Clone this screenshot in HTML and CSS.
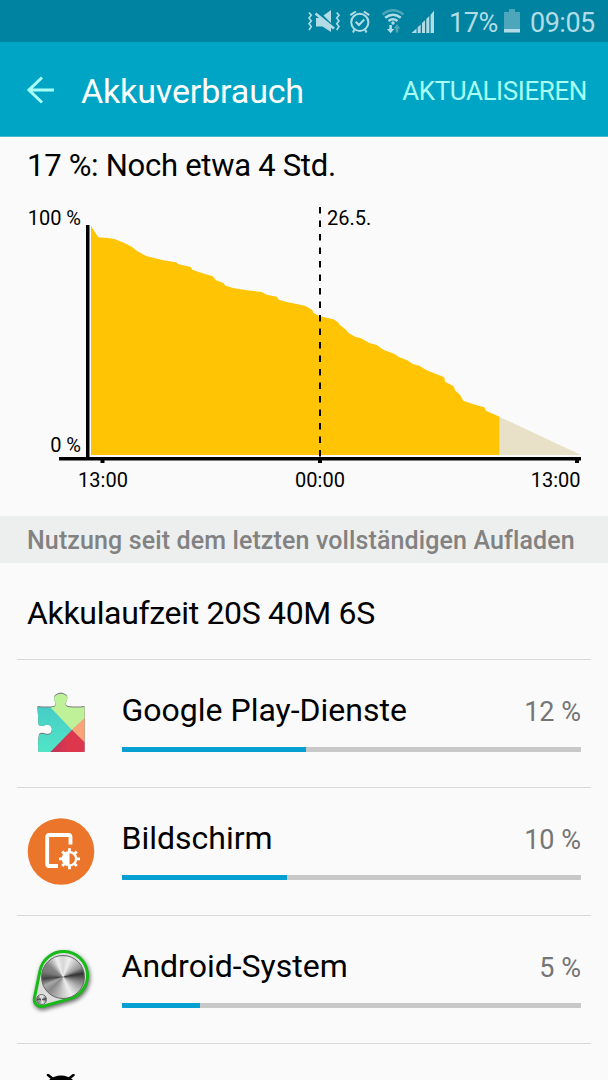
FILE: index.html
```
<!DOCTYPE html>
<html lang="de">
<head>
<meta charset="UTF-8">
<meta name="viewport" content="width=device-width, initial-scale=1.0">
<title>Akkuverbrauch</title>
<link rel="stylesheet" href="styles.css">
</head>
<body>

<div class="status-bar">
    <svg class="status-icons" width="132" height="42" viewBox="304 0 132 42">
        <!-- Ton aus -->
        <g fill="none" stroke="#b2dce5" stroke-width="1.6">
            <path d="M309 12.500l2.300 2.800-2.300 2.800 2.300 2.800-2.300 2.800 2.300 2.800-2.300 3.500"/>
            <path d="M336.700 12.500l2.300 2.800-2.300 2.800 2.300 2.800-2.300 2.800 2.300 2.800-2.300 3.500"/>
        </g>
        <path fill="#b2dce5" d="M323.500 15.500l7.500-5.500v13zM316 18h4.500l10.500 8.500v5.500l-8.500-5.500H316z"/>
        <path stroke="#b2dce5" stroke-width="2.600" d="M315.500 13.500L334 28.500"/>
        <!-- Wecker -->
        <g fill="none" stroke="#b2dce5" stroke-width="2">
            <circle cx="359.800" cy="22.300" r="8.600"/>
            <path d="M355.700 21.800l3.200 3.200 5.400-5.500M350.300 15.200l5.500-3.700M369.300 15.200l-5.500-3.700M354.500 29.500l-1.500 3M365 29.500l1.500 3"/>
        </g>
        <!-- WLAN -->
        <g fill="none" stroke-width="2.500">
            <path stroke="#4da6ba" d="M382.500 14.500q10.500-8.400 21 0"/>
            <path stroke="#b2dce5" d="M385.200 17.800q7.800-6 15.600 0M388.500 21q4.500-3.600 9 0"/>
        </g>
        <circle cx="393" cy="23" r="1.700" fill="#b2dce5"/>
        <path fill="#b2dce5" d="M389.300 25h2.600v4h2.400l-3.700 4.300-3.700-4.300h2.400z"/>
        <path fill="#4da6ba" d="M395.700 32.500h2.600v-4h2l-3.300-4.300-3.300 4.300h2z"/>
        <!-- Empfang -->
        <path fill="#b2dce5" d="M411.500 33l5-4.600V33zM417.700 27.300l3-2.900V33h-3zM422 23.100l3-2.900V33h-3zM426.300 19l3-2.900V33h-3zM430.600 14.700l3.400-4V33h-3.400z"/>
    </svg>
    <span class="percent">17%</span>
    <svg class="battery" width="16" height="24" viewBox="0 0 16 24">
        <path fill="#4da6ba" d="M5 0h6v3h5v17H0V3h5z"/>
        <path fill="#b2dce5" d="M0 20h16v3.500H0z"/>
    </svg>
    <span class="clock">09:05</span>
</div>

<div class="header">
    <svg class="back" width="28" height="28" viewBox="0 0 28 28">
        <path d="M27 14H2M15 1.500L2 14l13 12.500" fill="none" stroke="#a7fff6" stroke-width="3"/>
    </svg>
    <div class="title">Akkuverbrauch</div>
    <div class="refresh">AKTUALISIEREN</div>
</div>

<div class="remaining">17 %: Noch etwa 4 Std.</div>

<svg class="chart" width="608" height="316" viewBox="0 200 608 316">
    <path fill="#e9e1c7" d="M499.500 416.700L580 454.500V455h-80.500z"/>
    <path fill="#ffc403" d="M91 455V226L98.300 237.300 108 238 115 239.300 125 243.300 131.700 246.700 136.700 250.700 146 256 163.300 260.300 176 262.300 178.700 264.300 190.700 267 192.300 269.700 201.700 273 212.700 276.300 216 280.300 223.300 283 225.300 285.700 233.300 288 246.700 290.300 261.700 292 266.700 294.700 277 296.700 278.700 299.700 286.700 302 305 305.700 312.300 310 313.300 312.700 319 316 333.300 319.300 337.700 322 340 325 346 329.700 348.300 332.700 355 336.700 361 338.300 369.300 343 376.700 345 383.300 349.700 395 354.300 398.700 357 407.300 360.300 412.700 364 419.300 365.700 426.700 370.300 444.300 377.300 445 381.700 453.700 386.300 455.300 390.700 460 394.700 463.300 400.700 473.300 404.300 484.300 407.300 486 410.700 499.500 416.700V455z"/>
    <path class="day-line" d="M320 207V458"/>
    <path class="axis" d="M86 225h3.500v232H581v3.500h-2V463h-4v-2.500H322V463h-4v-2.500H104.500V463h-4v-2.500H59V457h27z"/>
    <text x="81" y="225" text-anchor="end">100 %</text>
    <text x="81" y="452" text-anchor="end">0 %</text>
    <text x="327" y="225">26.5.</text>
    <text x="103" y="487" text-anchor="middle">13:00</text>
    <text x="320" y="487" text-anchor="middle">00:00</text>
    <text x="580.500" y="487" text-anchor="end">13:00</text>
</svg>

<div class="section-title">Nutzung seit dem letzten vollständigen Aufladen</div>
<div class="runtime">Akkulaufzeit 20S 40M 6S</div>

<div class="app-list">
    <div class="item">
        <svg class="icon" width="68" height="68" viewBox="0 1.500 68 68">
            <defs>
                <clipPath id="puzzle">
                    <path d="M10.500 18.500Q20 19.500 27 18.500Q29.500 17.500 28.500 14Q26 10.500 28 7.500Q34 2.500 39.500 7.500Q41.500 10.500 38.500 14.500Q38 18 41 18.500Q49 19.500 57.500 18.500V63.500H11.500Q10.500 56 12 46.500Q13.500 44.500 17 45.500Q24.500 48.500 25 41Q24 34.500 17 37Q13 38.500 11.500 36Z"/>
                </clipPath>
                <linearGradient id="teal" x1="0" y1="0" x2="0" y2="1">
                    <stop offset="0" stop-color="#42c2c6"/>
                    <stop offset="1" stop-color="#52e8c7"/>
                </linearGradient>
                <linearGradient id="red">
                    <stop offset="0" stop-color="#b5325e"/>
                    <stop offset=".5" stop-color="#dd374e"/>
                </linearGradient>
            </defs>
            <path class="puzzle-edge" d="M10.500 18.500Q20 19.500 27 18.500Q29.500 17.500 28.500 14Q26 10.500 28 7.500Q34 2.500 39.500 7.500Q41.500 10.500 38.500 14.500Q38 18 41 18.500Q49 19.500 57.500 18.500V63.500H11.500Q10.500 56 12 46.500Q13.500 44.500 17 45.500Q24.500 48.500 25 41Q24 34.500 17 37Q13 38.500 11.500 36Z"/>
            <g clip-path="url(#puzzle)">
                <path fill="url(#teal)" d="M5 0h20l20 41.500L20 68H5z"/>
                <path fill="#bff199" d="M24 19.500V0h40v24L45 41.500z"/>
                <path fill="#faa477" d="M45 41.500L62 25v34z"/>
                <path fill="url(#red)" d="M45 41.500L64 60v8H19z"/>
            </g>
        </svg>
        <div class="info">
            <div class="row">
                <div class="name">Google Play-Dienste</div>
                <div class="value">12 %</div>
            </div>
            <div class="bar"><div class="fill" style="width: 40.100%"></div></div>
        </div>
    </div>
    <div class="item">
        <svg class="icon" width="68" height="68" viewBox="0 0 68 68">
            <circle cx="34" cy="33.500" r="33.300" fill="#eb762b"/>
            <path d="M43.500 26.500V19q0-2-2-2H22.200q-2 0-2 2v27q0 2 2 2H31" fill="none" stroke="#fff" stroke-width="3.800"/>
            <path d="M42.500 30.300v21M32 40.800h21M35.200 33.500l14.600 14.600M49.800 33.500L35.200 48.100" stroke="#fff" stroke-width="2.800"/>
            <circle cx="42.500" cy="40.800" r="7.800" fill="#fff"/>
            <path d="M42.500 35.300a5.500 5.500 0 0 1 0 11z" fill="#eb762b"/>
        </svg>
        <div class="info">
            <div class="row">
                <div class="name">Bildschirm</div>
                <div class="value">10 %</div>
            </div>
            <div class="bar"><div class="fill" style="width: 36.100%"></div></div>
        </div>
    </div>
    <div class="item">
        <div class="icon gear">
            <svg width="68" height="68" viewBox="0 0 68 68">
                <path class="belt" d="M13 24.700A24 24 0 1 1 43.100 52.600L16.200 60.200A7 7 0 0 1 7.400 52.100Z"/>
            </svg>
            <div class="knob"></div>
            <div class="knob small"></div>
        </div>
        <div class="info">
            <div class="row">
                <div class="name">Android-System</div>
                <div class="value">5 %</div>
            </div>
            <div class="bar"><div class="fill" style="width: 17.100%"></div></div>
        </div>
    </div>
    <div class="item last">
        <svg class="icon" width="68" height="6" viewBox="0 0 68 6">
            <path d="M21 1l5 4M46.500 1l-5 4" stroke="#000" stroke-width="2.600" stroke-linecap="round"/>
            <path d="M22 6Q27 1.500 34 1.500T46 6z"/>
        </svg>
    </div>
</div>

</body>
</html>
```
FILE: styles.css
```
body {
    margin: 0;
    width: 608px;
    height: 1080px;
    overflow: hidden;
    background: #fafafa;
    color: #000;
    font-family: Roboto, sans-serif;
}
svg {
    display: block;
    flex-shrink: 0;
}
.status-bar {
    display: flex;
    align-items: center;
    justify-content: flex-end;
    height: 42px;
    padding-right: 11px;
    background: #0083a0;
    color: #b2dce5;
    font-size: 27px;
    line-height: 42px;
}
.percent {
    width: 49px;
    margin: 4px 6px 0 13px;
    letter-spacing: -0.4px;
    white-space: nowrap;
}
.battery {
    margin-right: 10px;
}
.clock {
    width: 67px;
    margin-top: 4px;
    letter-spacing: -0.5px;
}
.header {
    box-sizing: border-box;
    display: flex;
    align-items: center;
    height: 95px;
    padding: 0 21px 0 27px;
    background: #00a5c5;
    border-bottom: 1px solid #4cb8cb;
    color: #fff;
}
.back {
    margin-top: 1px;
}
.title {
    flex: 1;
    margin-left: 26px;
    font-size: 34px;
    line-height: 40px;
    padding-top: 3px;
    letter-spacing: -0.15px;
}
.refresh {
    padding-top: 3px;
    font-size: 26px;
    letter-spacing: -0.4px;
    color: #a7fff6;
}
.remaining {
    height: 63px;
    padding-left: 27px;
    font-size: 31px;
    line-height: 57px;
    letter-spacing: -0.28px;
}
.chart text {
    font-size: 20px;
}
.day-line {
    stroke: #000;
    stroke-width: 2;
    stroke-dasharray: 6.5 7;
}
.section-title {
    height: 47px;
    padding-left: 27px;
    background: #edefee;
    color: #828282;
    font-size: 25px;
    font-weight: 500;
    line-height: 50px;
    letter-spacing: 0.12px;
}
.runtime {
    height: 95.500px;
    padding-left: 27px;
    font-size: 32px;
    line-height: 101px;
    letter-spacing: -0.33px;
}
.app-list {
    margin: 0 17px;
}
.item {
    box-sizing: border-box;
    display: flex;
    height: 128.300px;
    padding: 30px 10px 0;
    border-top: 1px solid #d9d9d9;
}
.last {
    height: 36px;
}
.info {
    flex: 1;
    margin-left: 26.500px;
}
.row {
    display: flex;
    justify-content: space-between;
    align-items: baseline;
    height: 57px;
}
.name {
    font-size: 32px;
    line-height: 40px;
}
.value {
    font-size: 27px;
    color: #757575;
}
.bar {
    height: 5px;
    background: #c8c8c8;
}
.fill {
    height: 5px;
    background: #05a0d1;
}
.puzzle-edge {
    fill: #888;
    filter: drop-shadow(0 -1px 0.4px #777);
}
.gear {
    position: relative;
    width: 68px;
    height: 68px;
}
.belt {
    fill: #ddd;
    stroke: #17bb17;
    stroke-width: 3;
    filter: drop-shadow(1px 2px 2px rgba(0, 0, 0, 0.6));
}
.knob {
    position: absolute;
    left: 14px;
    top: 9px;
    width: 42px;
    height: 42px;
    border: 1px solid #666;
    border-radius: 50%;
    background: conic-gradient(#d5d5d5, #eee 20deg, #999 60deg, #333 80deg, #777 100deg, #aaa 120deg, #eee 155deg, #ccc 180deg, #888 225deg, #aaa 245deg, #444 265deg, #777 285deg, #888 310deg, #eee 340deg, #d5d5d5);
}
.small {
    left: 9px;
    top: 48px;
    width: 9px;
    height: 9px;
}
```
